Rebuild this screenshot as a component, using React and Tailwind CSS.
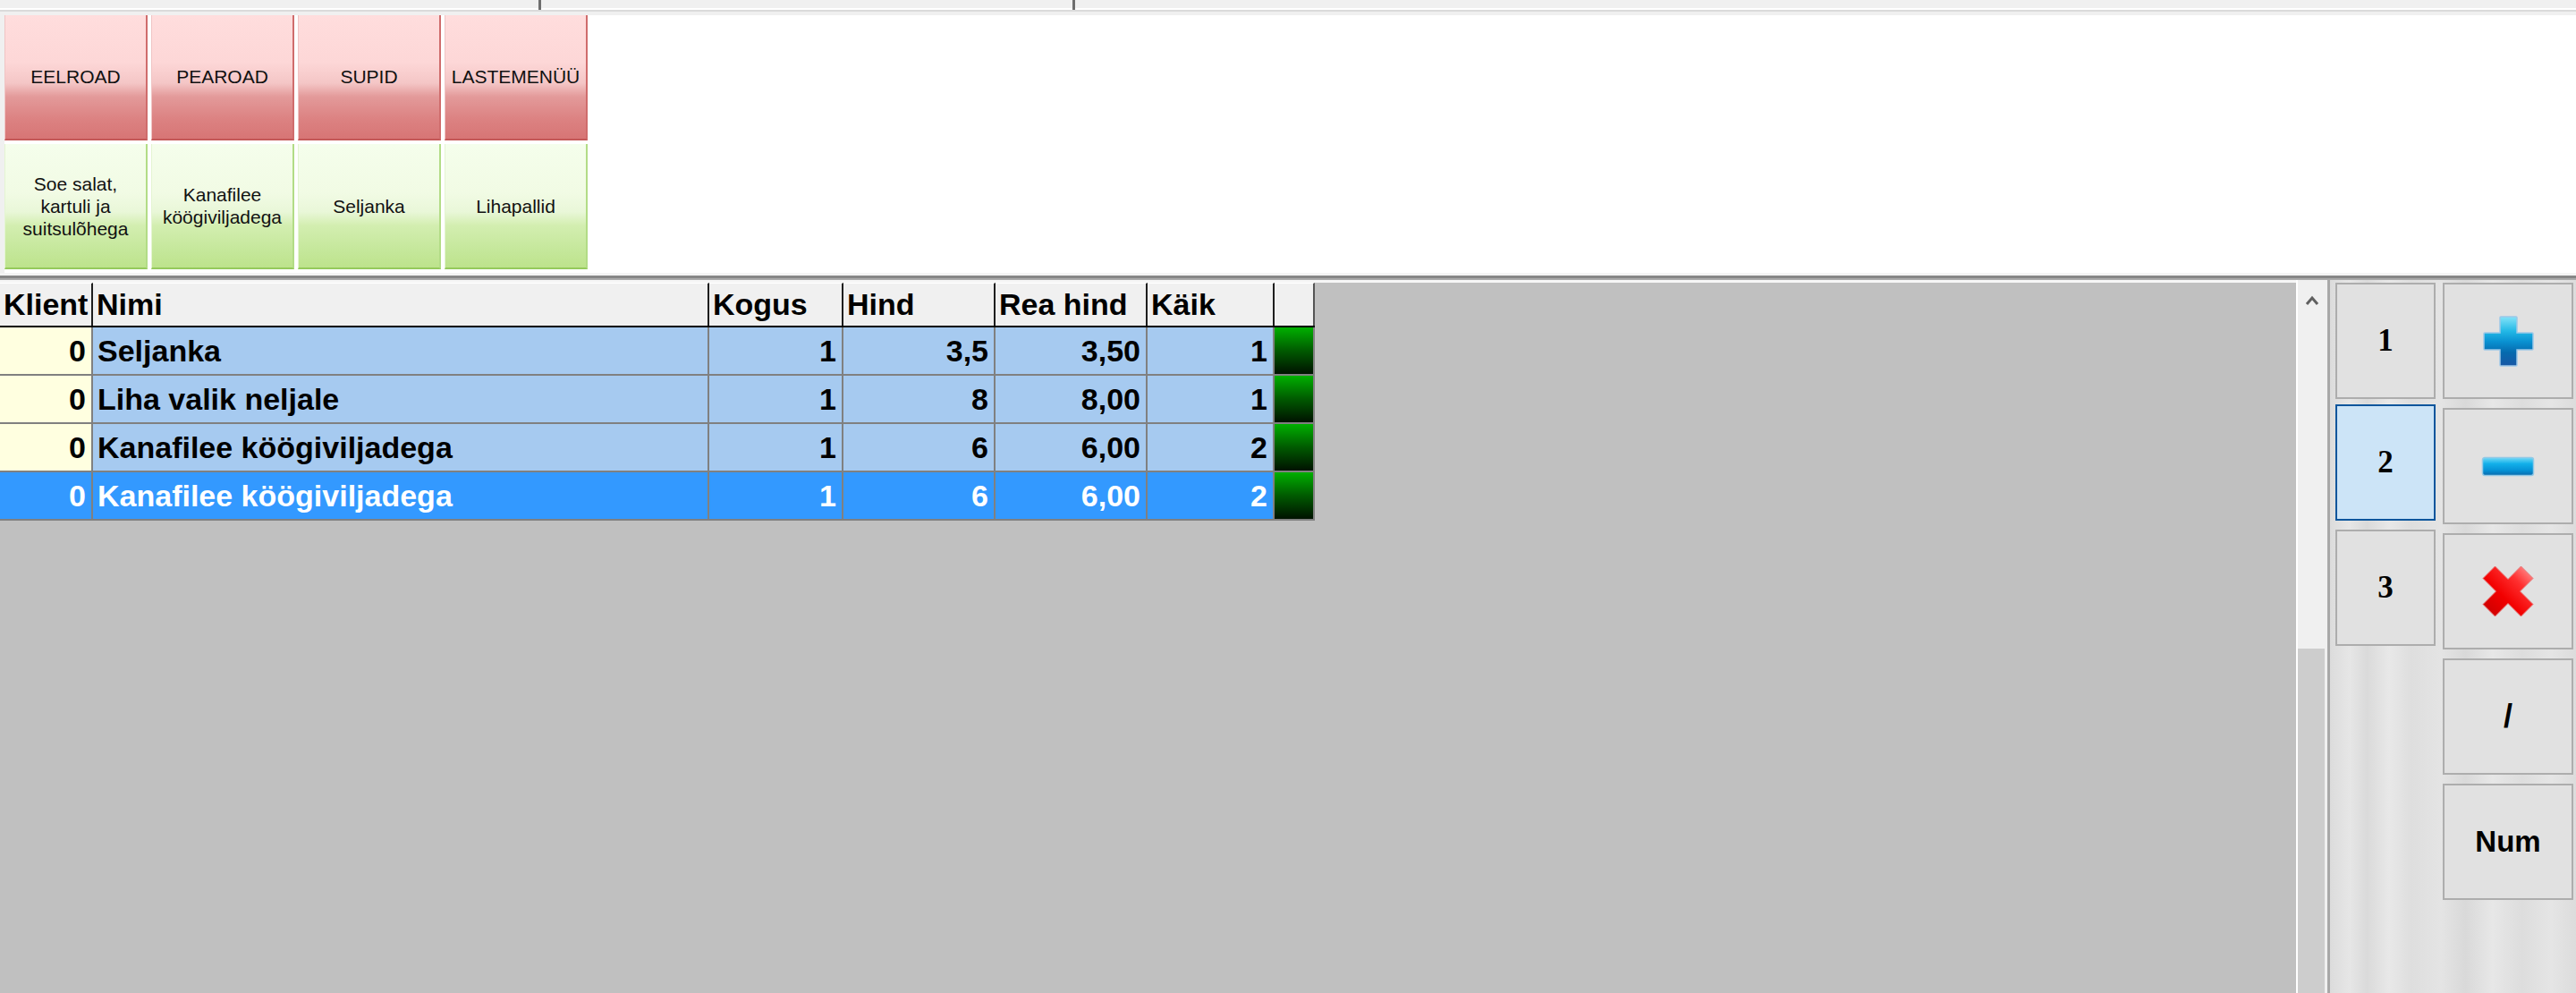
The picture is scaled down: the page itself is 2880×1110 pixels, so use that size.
import React from 'react';

const menuTop = ['EELROAD', 'PEAROAD', 'SUPID', 'LASTEMENÜÜ'];
const menuBottom = [['Soe salat,', 'kartuli ja', 'suitsulõhega'], ['Kanafilee', 'köögiviljadega'], ['Seljanka'], ['Lihapallid']];

const rows = [
  { k: 0, n: 'Seljanka', q: 1, h: '3,5', r: '3,50', c: 1 },
  { k: 0, n: 'Liha valik neljale', q: 1, h: '8', r: '8,00', c: 1 },
  { k: 0, n: 'Kanafilee köögiviljadega', q: 1, h: '6', r: '6,00', c: 2 },
  { k: 0, n: 'Kanafilee köögiviljadega', q: 1, h: '6', r: '6,00', c: 2, sel: true },
];

function RedButton({ label }) {
  return (
    <div className="w-[160px] h-[140px] flex items-center justify-center border-b-2 border-r-2 border-l border-b-[#c45858] border-r-[#cf6c6c] border-l-[#f0c4c4] bg-[linear-gradient(180deg,#ffdddd_0%,#fdd7d7_38%,#f4c6c6_55%,#e39a9a_66%,#dc8282_84%,#d77575_100%)] text-[21px] text-[#111]">
      {label}
    </div>
  );
}

function GreenButton({ lines }) {
  return (
    <div className="w-[160px] h-[140px] flex flex-col items-center justify-center border-b-2 border-r-2 border-l border-b-[#95ca5c] border-r-[#b2dc86] border-l-[#e4f5d2] bg-[linear-gradient(180deg,#f5feec_0%,#f1fbe4_40%,#e9f7d8_55%,#d3eeb0_66%,#c6e89d_84%,#bde38c_100%)] text-[21px] leading-[25px] text-[#111] text-center">
      {lines.map((l, i) => (
        <span key={i}>{l}</span>
      ))}
    </div>
  );
}

const cols = ['w-[104px]', 'w-[689px]', 'w-[150px]', 'w-[170px]', 'w-[170px]', 'w-[142px]'];

function PlusIcon() {
  return (
    <svg width="59" height="59" viewBox="-1 -1 59 59">
      <defs>
        <linearGradient id="pg" x1="0" y1="0" x2="0" y2="57" gradientUnits="userSpaceOnUse">
          <stop offset="0" stopColor="#8ae6fa" />
          <stop offset="0.3" stopColor="#22b8e6" />
          <stop offset="0.5" stopColor="#0a92d2" />
          <stop offset="0.72" stopColor="#056aae" />
          <stop offset="1" stopColor="#1a56a4" />
        </linearGradient>
      </defs>
      <path
        d="M20 1 H37 Q38 1 38 2 V19 H55 Q56 19 56 20 V37 Q56 38 55 38 H38 V55 Q38 56 37 56 H20 Q19 56 19 55 V38 H2 Q1 38 1 37 V20 Q1 19 2 19 H19 V2 Q19 1 20 1 Z"
        fill="url(#pg)"
        stroke="#9cc8e8"
        strokeWidth="1.5"
      />
    </svg>
  );
}

function MinusIcon() {
  return (
    <svg width="60" height="23" viewBox="-1 -1 60 23">
      <defs>
        <linearGradient id="mg" x1="0" y1="0" x2="0" y2="21" gradientUnits="userSpaceOnUse">
          <stop offset="0" stopColor="#7adcf7" />
          <stop offset="0.35" stopColor="#12b0ea" />
          <stop offset="0.7" stopColor="#0592d6" />
          <stop offset="1" stopColor="#0a66a8" />
        </linearGradient>
      </defs>
      <rect x="0.5" y="0.5" width="57" height="20" rx="2.5" fill="url(#mg)" stroke="#93c9e6" strokeWidth="1.5" />
    </svg>
  );
}

function CrossIcon() {
  const a = 13.5;
  const pts = [
    [a, 0], [28, 28 - a], [56 - a, 0], [56, a], [28 + a, 28], [56, 56 - a],
    [56 - a, 56], [28, 28 + a], [a, 56], [0, 56 - a], [28 - a, 28], [0, a],
  ].map((p) => p.join(',')).join(' ');
  return (
    <svg width="58" height="58" viewBox="-1 -1 58 58">
      <defs>
        <linearGradient id="xg" x1="56" y1="0" x2="0" y2="56" gradientUnits="userSpaceOnUse">
          <stop offset="0" stopColor="#ffa4a4" />
          <stop offset="0.3" stopColor="#ff3030" />
          <stop offset="0.6" stopColor="#f20000" />
          <stop offset="1" stopColor="#c40000" />
        </linearGradient>
      </defs>
      <polygon points={pts} fill="url(#xg)" stroke="#e67676" strokeWidth="1" strokeLinejoin="round" />
    </svg>
  );
}

function PadButton({ children, sel, w, className = '' }) {
  return (
    <div
      className={`${w} h-[130px] flex items-center justify-center border-2 ${
        sel ? 'border-[#0a559c] bg-[#cce4f7]' : 'border-[#adadad] bg-[#e1e1e1]'
      } ${className}`}
    >
      {children}
    </div>
  );
}

export default function App() {
  return (
    <div className="w-[2880px] h-[1110px] flex flex-col bg-white overflow-hidden font-['Liberation_Sans',Arial,sans-serif]">
      {/* top strip */}
      <div className="h-[11px] flex bg-[#f0f0f0] border-b-2 border-white">
        <div className="w-[602px]" />
        <div className="w-[3px] bg-[#6e6e6e] h-[11px]" />
        <div className="w-[594px]" />
        <div className="w-[3px] bg-[#6e6e6e] h-[11px]" />
      </div>
      <div className="h-[2px] bg-[#dadada]" />
      <div className="h-[4px] bg-[#f0f0f0]" />

      {/* menu buttons */}
      <div className="h-[288px] flex border-l-[5px] border-[#f0f0f0] bg-white">
        <div className="grid grid-cols-[repeat(4,160px)] grid-rows-[140px_140px] gap-[4px]">
          {menuTop.map((m) => (
            <RedButton key={m} label={m} />
          ))}
          {menuBottom.map((m, i) => (
            <GreenButton key={i} lines={m} />
          ))}
        </div>
      </div>

      <div className="h-[3px] bg-[#f4f4f4]" />
      <div className="h-[3px] bg-[#868686]" />
      <div className="h-[2px] bg-[#a9a9a9]" />

      {/* main */}
      <div className="flex-1 flex min-h-0">
        <div className="w-[2567px] bg-[#c0c0c0] border-t-[3px] border-[#f6f6f6]">
          <div className="w-[1470px] font-bold text-[34px] text-black">
            <div className="flex h-[50px] bg-[#f0f0f0] border-b-2 border-black">
              {['Klient', 'Nimi', 'Kogus', 'Hind', 'Rea hind', 'Käik'].map((h, i) => (
                <div key={h} className={`${cols[i]} flex items-center pl-[4px] border-r-2 border-r-[#1e1e1e] border-t border-t-white`}>
                  {h}
                </div>
              ))}
              <div className="w-[45px] border-r-2 border-r-[#555] border-t border-t-white" />
            </div>
            {rows.map((r, i) => {
              const cell = r.sel ? 'bg-[#3399ff] text-white' : 'bg-[#a6caf0] text-black';
              const first = r.sel ? 'bg-[#3399ff] text-white' : 'bg-[#ffffe0] text-black';
              return (
                <div key={i} className="flex h-[54px] border-b-2 border-[#808080]">
                  <div className={`${cols[0]} ${first} flex items-center justify-end pr-[6px] border-r-2 border-[#808080]`}>{r.k}</div>
                  <div className={`${cols[1]} ${cell} flex items-center pl-[5px] border-r-2 border-[#808080]`}>{r.n}</div>
                  <div className={`${cols[2]} ${cell} flex items-center justify-end pr-[6px] border-r-2 border-[#808080]`}>{r.q}</div>
                  <div className={`${cols[3]} ${cell} flex items-center justify-end pr-[6px] border-r-2 border-[#808080]`}>{r.h}</div>
                  <div className={`${cols[4]} ${cell} flex items-center justify-end pr-[6px] border-r-2 border-[#808080]`}>{r.r}</div>
                  <div className={`${cols[5]} ${cell} flex items-center justify-end pr-[6px] border-r-2 border-[#808080]`}>{r.c}</div>
                  <div className="w-[45px] bg-[linear-gradient(180deg,#00b000,#005a00_50%,#001200)] border-r-2 border-[#808080]" />
                </div>
              );
            })}
          </div>
        </div>

        {/* scrollbar */}
        <div className="w-[35px] flex flex-col border-l-2 border-white bg-[#f0f0f0]">
          <div className="h-[412px] flex justify-start pl-[8px] pt-[16px]">
            <svg width="16" height="13" viewBox="0 0 16 13">
              <path d="M2 11 L8 4 L14 11" fill="none" stroke="#606060" strokeWidth="3" />
            </svg>
          </div>
          <div className="flex-1 w-[30px] bg-[#cdcdcd]" />
        </div>
        <div className="w-[3px] bg-[#a8a8a8]" />

        {/* keypad */}
        <div className="flex-1 flex gap-[8px] pl-[6px] pt-[3px] bg-[linear-gradient(90deg,#dcdcdc,#e6e6e6_8%,#dadada_15%,#e8e8e8_24%,#dedede_33%,#e4e4e4_45%,#d9d9d9_55%,#e7e7e7_66%,#dddddd_78%,#e5e5e5_90%,#dcdcdc)]">
          <div className="flex flex-col font-['Liberation_Serif',serif] font-bold text-[35px] text-black">
            <PadButton w="w-[112px]">1</PadButton>
            <PadButton w="w-[112px]" sel className="mt-[6px]">2</PadButton>
            <PadButton w="w-[112px]" className="mt-[10px]">3</PadButton>
          </div>
          <div className="flex flex-col gap-[10px] font-bold text-[33px] text-black">
            <PadButton w="w-[146px]"><PlusIcon /></PadButton>
            <PadButton w="w-[146px]"><MinusIcon /></PadButton>
            <PadButton w="w-[146px]"><CrossIcon /></PadButton>
            <PadButton w="w-[146px]"><span className="text-[36px]">/</span></PadButton>
            <PadButton w="w-[146px]">Num</PadButton>
          </div>
        </div>
      </div>
    </div>
  );
}
